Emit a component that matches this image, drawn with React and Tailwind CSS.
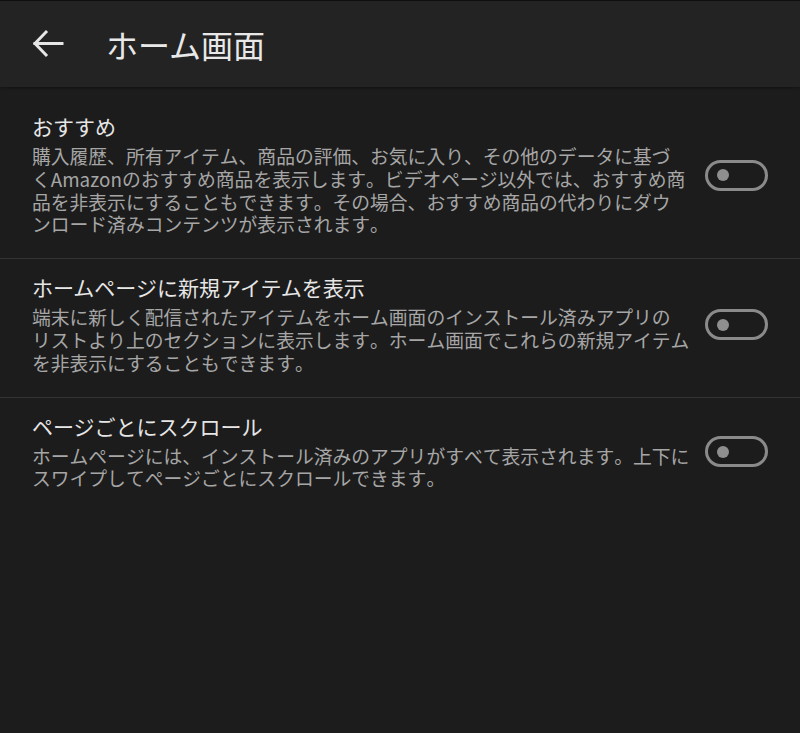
import React from "react";

const font = { fontFamily: '"Noto Sans CJK JP", "Noto Sans", sans-serif' };

function Toggle() {
  return (
    <div className="flex h-[31px] w-[63px] shrink-0 items-center rounded-full border-[3px] border-[#8a8a8a] pl-[9px]">
      <div className="h-[12px] w-[12px] rounded-full bg-[#8f8f8f]" />
    </div>
  );
}

function Row({ title, lines, divider, first }) {
  return (
    <div
      className={`flex items-center pl-[32px] pr-[32px] ${first ? "pt-[27px]" : "pt-[16px]"} pb-[22px] ${divider ? "border-b border-[#333333]" : ""}`}
    >
      <div className="flex-1">
        <div className="text-[21px] leading-[25px] text-[#e6e6e6]">{title}</div>
        <div className="mt-[6px] text-[18.8px] leading-[22.8px] text-[#a6a6a6] [font-kerning:none]">
          {lines.map((l, i) => (
            <div key={i} className="whitespace-nowrap">
              {l}
            </div>
          ))}
        </div>
      </div>
      <Toggle />
    </div>
  );
}

export default function App() {
  return (
    <div className="h-[733px] w-[800px] overflow-hidden bg-[#1c1c1c]" style={font}>
      <div className="relative z-10 flex h-[87px] items-center border-t border-[#0e0e0e] bg-[#232323] shadow-[0_1px_3px_rgba(0,0,0,0.35)]">
        <div className="ml-[31px] flex h-[34px] w-[34px] items-center justify-center">
          <svg width="34" height="34" viewBox="0 0 34 34" fill="none" stroke="#e6e6e6" strokeWidth="3" strokeLinecap="square">
            <path d="M4 16.5 H31" />
            <path d="M15 5 L4 16.5 L15 28" />
          </svg>
        </div>
        <div className="ml-[41px] text-[32px] leading-[40px] text-[#e8e8e8]">ホーム画面</div>
      </div>
      <div>
        <Row
          first
          divider
          title="おすすめ"
          lines={[
            "購入履歴、所有アイテム、商品の評価、お気に入り、その他のデータに基づ",
            "くAmazonのおすすめ商品を表示します。ビデオページ以外では、おすすめ商",
            "品を非表示にすることもできます。その場合、おすすめ商品の代わりにダウ",
            "ンロード済みコンテンツが表示されます。",
          ]}
        />
        <Row
          divider
          title="ホームページに新規アイテムを表示"
          lines={[
            "端末に新しく配信されたアイテムをホーム画面のインストール済みアプリの",
            "リストより上のセクションに表示します。ホーム画面でこれらの新規アイテム",
            "を非表示にすることもできます。",
          ]}
        />
        <Row
          title="ページごとにスクロール"
          lines={[
            "ホームページには、インストール済みのアプリがすべて表示されます。上下に",
            "スワイプしてページごとにスクロールできます。",
          ]}
        />
      </div>
    </div>
  );
}
